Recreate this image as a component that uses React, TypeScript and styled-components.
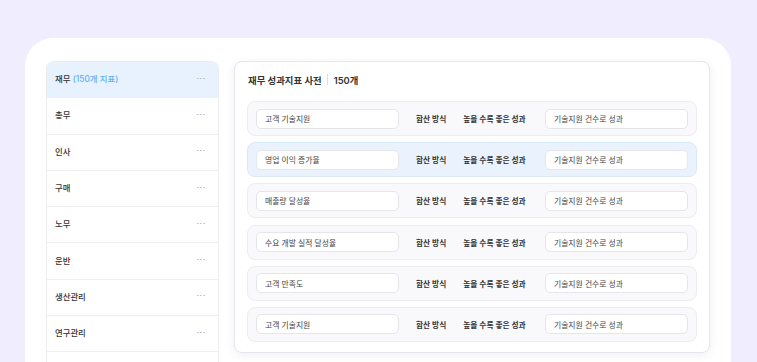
import React from 'react';
import styled, { createGlobalStyle } from 'styled-components';

const GlobalStyle = createGlobalStyle`
  html, body {
    margin: 0;
    padding: 0;
    background: #f0edfe;
    font-family: Inter, 'Noto Sans CJK KR', sans-serif;
    color: #333;
    overflow: hidden;
  }
`;

const categories = ['재무', '총무', '인사', '구매', '노무', '운반', '생산관리', '연구관리', ''];

const metrics = [
  { name: '고객 기술지원', active: false },
  { name: '영업 이익 증가율', active: true },
  { name: '매출량 달성율', active: false },
  { name: '수요 개발 실적 달성율', active: false },
  { name: '고객 만족도', active: false },
  { name: '고객 기술지원', active: false },
];

export default function App() {
  return (
    <>
      <GlobalStyle />
      <PAGE>
        <CARD>
          <SIDEBAR>
            {categories.map((c, idx) => (
              <CATEGORY key={idx} active={idx === 0}>
                <LABEL>
                  {c}
                  {idx === 0 && <COUNT> (150개 지표)</COUNT>}
                </LABEL>
                {c && <MORE>···</MORE>}
              </CATEGORY>
            ))}
          </SIDEBAR>
          <PANEL>
            <HEADER>
              재무 성과지표 사전
              <DIVIDER />
              150개
            </HEADER>
            <LIST>
              {metrics.map((m, idx) => (
                <ROW key={idx} active={m.active}>
                  <FIELD>{m.name}</FIELD>
                  <TAG>합산 방식</TAG>
                  <TAG>높을 수록 좋은 성과</TAG>
                  <FIELD>기술지원 건수로 성과</FIELD>
                </ROW>
              ))}
            </LIST>
          </PANEL>
        </CARD>
      </PAGE>
    </>
  );
}

const PAGE = styled.div`
  width: 757px;
  height: 362px;
  padding: 38px 0 0 25px;
  box-sizing: border-box;
  overflow: hidden;
`;

const CARD = styled.div`
  width: 706px;
  height: 360px;
  background: #fff;
  border-radius: 28px;
  padding: 23px 0 0 21px;
  box-sizing: border-box;
  display: flex;
  align-items: flex-start;
  gap: 15px;
`;

const SIDEBAR = styled.ul`
  margin: 0;
  padding: 0;
  list-style: none;
  width: 173px;
  height: 320px;
  flex-shrink: 0;
  box-sizing: border-box;
  border: 1px solid #ebebf0;
  border-bottom: none;
  border-radius: 8px 8px 0 0;
  overflow: hidden;
`;

const CATEGORY = styled.li<{ active?: boolean }>`
  height: 36.3px;
  box-sizing: border-box;
  border-bottom: 1px solid #efeff3;
  background: ${({ active }) => (active ? '#e8f2fe' : '#fff')};
  display: flex;
  align-items: center;
  justify-content: space-between;
  padding: 0 12px 3px 8px;
`;

const LABEL = styled.span`
  font-size: 8.4px;
  font-weight: 500;
  color: #333;
  white-space: nowrap;
`;

const COUNT = styled.span`
  color: #5eaef7;
`;

const MORE = styled.span`
  font-size: 9px;
  color: #a0a0a8;
  letter-spacing: 0.6px;
`;

const PANEL = styled.div`
  width: 476px;
  height: 292px;
  flex-shrink: 0;
  box-sizing: border-box;
  border: 1px solid #e6e6ee;
  border-radius: 8px;
  box-shadow: 0 2px 10px rgba(60, 60, 90, 0.08);
  background: #fff;
  padding: 10px 12px 0 12px;
`;

const HEADER = styled.div`
  display: flex;
  align-items: center;
  height: 15px;
  margin-left: 1px;
  font-size: 9.4px;
  font-weight: 600;
  color: #333;
  white-space: nowrap;
`;

const DIVIDER = styled.span`
  display: inline-block;
  width: 1px;
  height: 11px;
  background: #dcdce2;
  margin: 0 6px 0 5px;
`;

const LIST = styled.div`
  margin-top: 14px;
  display: flex;
  flex-direction: column;
  gap: 6.2px;
`;

const ROW = styled.div<{ active?: boolean }>`
  height: 35px;
  box-sizing: border-box;
  border: 1px solid ${({ active }) => (active ? '#d9e8fb' : '#ececf1')};
  background: ${({ active }) => (active ? '#eaf3fd' : '#f9f9fb')};
  border-radius: 8px;
  display: flex;
  align-items: center;
  gap: 17px;
  padding: 0 8px 0 8px;
`;

const FIELD = styled.div`
  width: 143px;
  height: 20px;
  flex-shrink: 0;
  box-sizing: border-box;
  border: 1px solid #e5e5ec;
  border-radius: 5px;
  background: #fff;
  display: flex;
  align-items: center;
  padding-left: 8px;
  font-size: 7.8px;
  color: #444;
  white-space: nowrap;
  &:last-child {
    margin-left: auto;
  }
`;

const TAG = styled.span`
  font-size: 7.7px;
  font-weight: 600;
  color: #333;
  white-space: nowrap;
`;
